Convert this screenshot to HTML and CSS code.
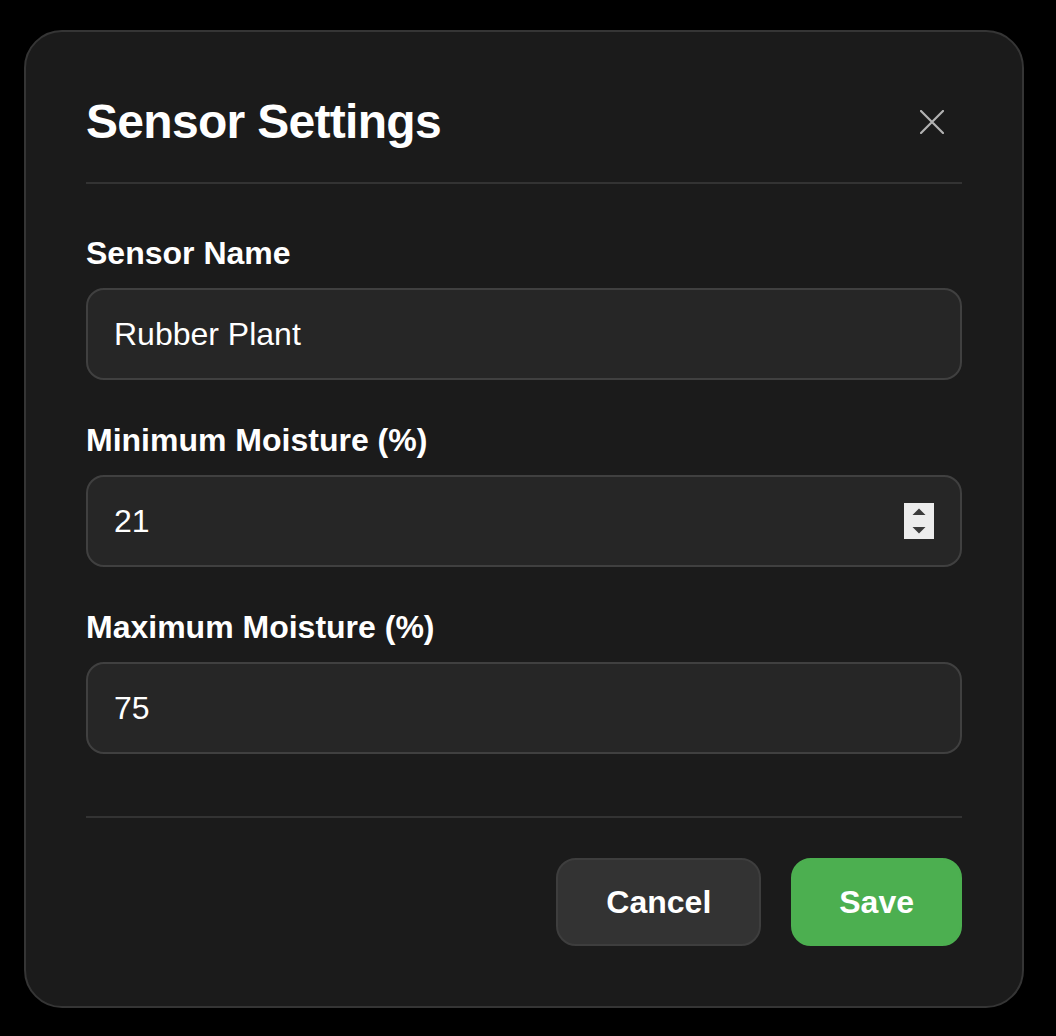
FILE: index.html
```html
<!DOCTYPE html>
<html lang="en">
<head>
    <meta charset="UTF-8">
    <meta name="viewport" content="width=device-width, initial-scale=1.0">
    <title>Sensor Settings</title>
    <link rel="stylesheet" href="styles.css">
</head>
<body>

    <div class="modal">
        <div class="modal-header">
            <h1 class="modal-title">Sensor Settings</h1>
            <button class="close-btn" aria-label="Close">
                <svg width="24" height="24" viewBox="0 0 24 24">
                    <path d="M1 1 L23 23 M23 1 L1 23" stroke="#b2b2b2" stroke-width="2.2" stroke-linecap="round" fill="none"/>
                </svg>
            </button>
        </div>

        <div class="modal-body">
            <div class="form-group">
                <label class="form-label" for="sensorName">Sensor Name</label>
                <div class="field">
                    <input type="text" id="sensorName" value="Rubber Plant">
                </div>
            </div>
            <div class="form-group">
                <label class="form-label" for="minMoisture">Minimum Moisture (%)</label>
                <div class="field">
                    <input type="text" id="minMoisture" value="21">
                    <span class="spinner">
                        <svg width="30" height="36" viewBox="0 0 30 36">
                            <path d="M8.5 12 L15 5.5 L21.5 12 Z" fill="#3a3a3a"/>
                            <path d="M8.5 24 L15 30.5 L21.5 24 Z" fill="#3a3a3a"/>
                        </svg>
                    </span>
                </div>
            </div>
            <div class="form-group">
                <label class="form-label" for="maxMoisture">Maximum Moisture (%)</label>
                <div class="field">
                    <input type="text" id="maxMoisture" value="75">
                </div>
            </div>
        </div>

        <div class="modal-footer">
            <button class="btn btn-cancel">Cancel</button>
            <button class="btn btn-save">Save</button>
        </div>
    </div>

</body>
</html>
```

FILE: styles.css
```css
body {
    margin: 0;
    background-color: #000;
    color: #fff;
    font-family: "Liberation Sans", Arial, sans-serif;
}
.modal {
    box-sizing: border-box;
    width: 1000px;
    margin: 30px 0 0 24px;
    padding: 60px;
    background-color: #1b1b1b;
    border: 2px solid #353535;
    border-radius: 38px;
}
.modal-header {
    display: flex;
    justify-content: space-between;
    align-items: center;
    padding-bottom: 30px;
    border-bottom: 2px solid #333;
}
.modal-title {
    margin: 0;
    font-size: 48px;
    font-weight: bold;
    line-height: 56px;
    letter-spacing: -0.7px;
}
.close-btn {
    width: 60px;
    height: 60px;
    padding: 0;
    background: none;
    border: none;
    display: flex;
    align-items: center;
    justify-content: center;
    cursor: pointer;
}
.modal-body {
    padding: 51px 0 20px;
}
.form-group {
    margin-bottom: 42px;
}
.form-label {
    display: block;
    font-size: 32px;
    font-weight: bold;
    line-height: 37px;
    margin-bottom: 16px;
}
.field {
    box-sizing: border-box;
    height: 92px;
    display: flex;
    align-items: center;
    padding: 0 26px 0 26px;
    background-color: #262626;
    border: 2px solid #404040;
    border-radius: 18px;
}
.field input {
    flex: 1;
    min-width: 0;
    padding: 0;
    border: none;
    outline: none;
    background: transparent;
    color: #fff;
    font-family: "Liberation Sans", Arial, sans-serif;
    font-size: 32px;
}
.spinner {
    width: 30px;
    height: 36px;
    background-color: #ececec;
    display: flex;
}
.modal-footer {
    display: flex;
    justify-content: flex-end;
    gap: 30px;
    padding-top: 40px;
    border-top: 2px solid #333;
}
.btn {
    height: 88px;
    padding: 0 48px;
    border-radius: 20px;
    font-family: "Liberation Sans", Arial, sans-serif;
    font-size: 32px;
    font-weight: bold;
    color: #fff;
    cursor: pointer;
}
.btn-cancel {
    background-color: #333;
    border: 2px solid #3e3e3e;
}
.btn-save {
    padding: 0 46px;
    background-color: #4caf50;
    border: 2px solid #4caf50;
}
```
